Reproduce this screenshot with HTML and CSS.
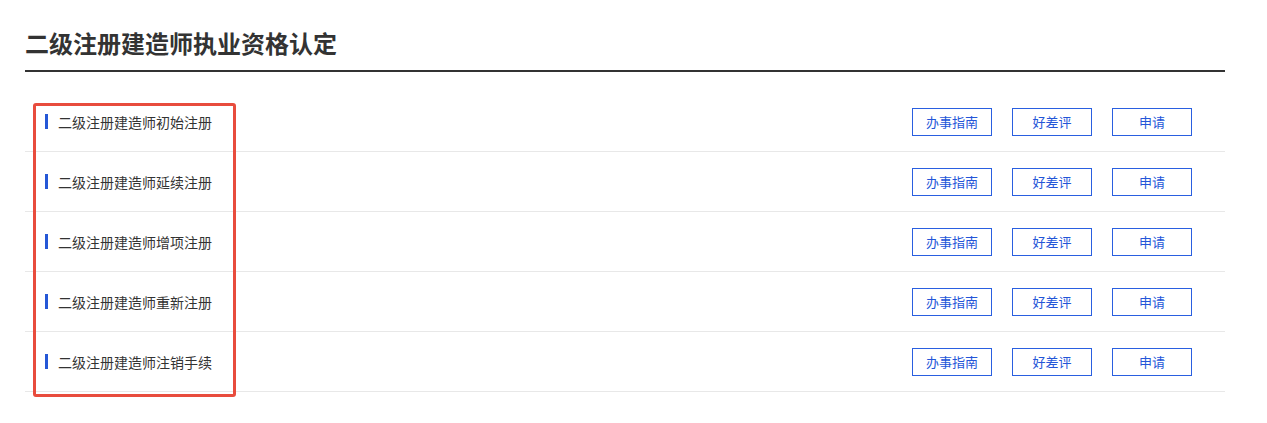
FILE: index.html
```html
<!DOCTYPE html>
<html lang="zh-CN">
<head>
<meta charset="utf-8">
<title>二级注册建造师执业资格认定</title>
<link rel="stylesheet" href="styles.css">
</head>
<body>
<div class="page">
  <h1 class="title">二级注册建造师执业资格认定</h1>
  <ul class="list">
    <li class="row">
      <span class="name">二级注册建造师初始注册</span>
      <div class="actions"><a class="btn">办事指南</a><a class="btn">好差评</a><a class="btn">申请</a></div>
    </li>
    <li class="row">
      <span class="name">二级注册建造师延续注册</span>
      <div class="actions"><a class="btn">办事指南</a><a class="btn">好差评</a><a class="btn">申请</a></div>
    </li>
    <li class="row">
      <span class="name">二级注册建造师增项注册</span>
      <div class="actions"><a class="btn">办事指南</a><a class="btn">好差评</a><a class="btn">申请</a></div>
    </li>
    <li class="row">
      <span class="name">二级注册建造师重新注册</span>
      <div class="actions"><a class="btn">办事指南</a><a class="btn">好差评</a><a class="btn">申请</a></div>
    </li>
    <li class="row">
      <span class="name">二级注册建造师注销手续</span>
      <div class="actions"><a class="btn">办事指南</a><a class="btn">好差评</a><a class="btn">申请</a></div>
    </li>
  </ul>
  <div class="highlight"></div>
</div>
</body>
</html>
```
FILE: styles.css
```css
* { box-sizing: border-box; }
html, body { margin: 0; padding: 0; background: #fff; }
body {
  font-family: "Noto Sans CJK SC", "Noto Sans", sans-serif;
  color: #333;
  min-height: 423px;
}
.page {
  position: relative;
  width: 1200px;
  margin-left: 25px;
  padding-bottom: 30px;
}
.title {
  margin: 0;
  padding: 26px 0 10px;
  line-height: 34px;
  font-size: 24px;
  font-weight: 700;
  color: #333;
  border-bottom: 2px solid #333;
}
.list {
  list-style: none;
  margin: 20px 0 0;
  padding: 0;
}
.row {
  display: flex;
  align-items: center;
  justify-content: space-between;
  height: 60px;
  border-bottom: 1px solid #e8e8e8;
  padding: 0 33px 0 20px;
}
.name {
  display: flex;
  align-items: center;
  gap: 10px;
  font-size: 14px;
  line-height: 20px;
  color: #333;
}
.name::before {
  content: "";
  width: 3px;
  height: 15px;
  background: #2557d6;
}
.actions {
  display: flex;
  gap: 20px;
}
.btn {
  display: flex;
  align-items: center;
  justify-content: center;
  width: 80px;
  height: 28px;
  border: 1px solid #2a5fe0;
  color: #2456d8;
  font-size: 13px;
  cursor: pointer;
}
.highlight {
  position: absolute;
  left: 8px;
  top: 103px;
  width: 203px;
  height: 294px;
  border: 3px solid #e84c3d;
  border-radius: 3px;
  pointer-events: none;
}
```
